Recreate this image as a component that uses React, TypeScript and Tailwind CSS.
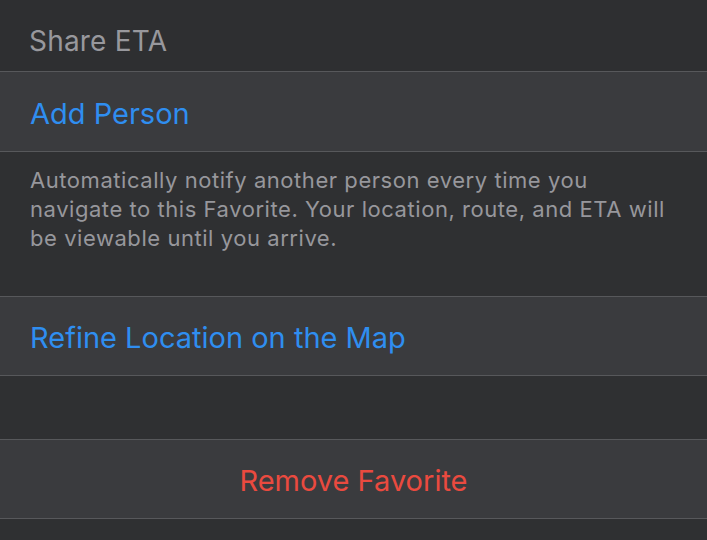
import React from "react";

const font = { fontFamily: "Inter, 'Liberation Sans', sans-serif" };

function Divider() {
    return <div className="h-px bg-[#57585b]" />;
}

export default function App() {
    return (
        <div className="w-[707px] h-[540px] overflow-hidden bg-[#2f3032]" style={font}>
            {/* Section header */}
            <div className="h-[71px] flex items-end pb-[9px] px-[29px] bg-[#2e2f31]">
                <span className="text-[28px] text-[#98989d] tracking-[0.2px]">Share ETA</span>
            </div>
            <Divider />

            {/* Add Person */}
            <div className="h-[79px] flex items-center pt-[5px] px-[30px] bg-[#3a3b3e]">
                <span className="text-[29px] text-[#2f8ef0]">Add Person</span>
            </div>
            <Divider />

            {/* Footer explanation */}
            <div className="h-[144px] pl-[30px] pr-[20px] pt-[14px] bg-[#2f3032]">
                <p className="text-[22px] leading-[29px] text-[#97979c] tracking-[0.55px] whitespace-nowrap">
                    Automatically notify another person every time you
                    <br />
                    navigate to this Favorite. Your location, route, and ETA will
                    <br />
                    be viewable until you arrive.
                </p>
            </div>
            <Divider />

            {/* Refine location */}
            <div className="h-[78px] flex items-center pt-[4px] px-[30px] bg-[#3a3b3e]">
                <span className="text-[29px] text-[#2f8ef0]">Refine Location on the Map</span>
            </div>
            <Divider />

            <div className="h-[63px] bg-[#2f3032]" />
            <Divider />

            {/* Remove favorite */}
            <div className="h-[78px] flex items-center justify-center pt-[4px] bg-[#3a3b3e]">
                <span className="text-[29px] text-[#ea4a3f]">Remove Favorite</span>
            </div>
            <Divider />
        </div>
    );
}
